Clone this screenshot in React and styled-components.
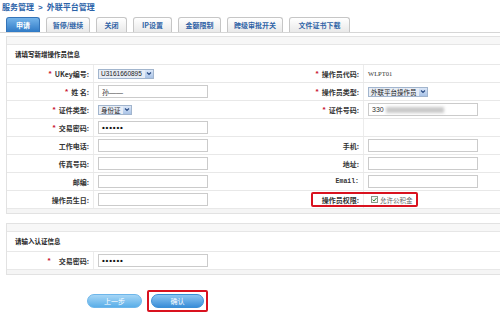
import React from 'react';
import styled, { createGlobalStyle } from 'styled-components';

const GlobalStyle = createGlobalStyle`
  html, body { margin: 0; padding: 0; background: #fff; }
  body { font-family: "Noto Sans CJK SC", "Liberation Sans", sans-serif; }
`;

const Page = styled.div`
  width: 500px;
  height: 315px;
  overflow: hidden;
`;

const Crumb = styled.div`
  height: 13px;
  line-height: 13px;
  padding-left: 2px;
  font-size: 8px;
  font-weight: 700;
  color: #2b62a8;
  span { margin: 0 4px; font-family: "Liberation Sans", sans-serif; }
`;

const TabBar = styled.div`
  display: flex;
  gap: 6px;
  margin-top: 4px;
  height: 15px;
  padding-left: 6px;
  border-bottom: 1px solid #d6d6d6;
`;

const Tab = styled.div`
  width: ${({ $w }) => $w}px;
  height: 15px;
  box-sizing: border-box;
  border: 1px solid ${({ $active }) => ($active ? '#3474b8' : '#c6c6c6')};
  border-bottom: none;
  border-radius: 3px 3px 0 0;
  background: ${({ $active }) =>
    $active ? 'linear-gradient(#74b4ea, #2f7ac6)' : 'linear-gradient(#ffffff, #e9e9e9)'};
  color: ${({ $active }) => ($active ? '#fff' : '#2f63a6')};
  font-size: 7px;
  font-weight: 700;
  display: flex;
  align-items: center;
  justify-content: center;
  white-space: nowrap;
`;

const Content = styled.div`
  padding-left: 6px;
`;

const Panel = styled.div`
  margin-top: ${({ $mt }) => $mt}px;
  width: 520px;
  border: 1px solid #e2e2e2;
  border-right: none;
`;

const HeadStrip = styled.div`
  height: 7px;
  background: #f7f7f7;
  border-bottom: 1px solid #e6e6e6;
`;

const FootStrip = styled.div`
  height: 4px;
  background: #f5f5f5;
`;

const SectionTitle = styled.div`
  height: 19px;
  line-height: 19px;
  padding-left: 8px;
  font-size: 6.5px;
  font-weight: 700;
  color: #222;
  border-bottom: 1px solid #e8e8e8;
`;

const Row = styled.div`
  position: relative;
  display: grid;
  grid-template-columns: 87px 180px 90px 1fr;
  height: 17px;
  border-bottom: 1px solid #e8e8e8;
`;

const Label = styled.div`
  display: flex;
  align-items: center;
  justify-content: flex-end;
  gap: ${({ $gap }) => $gap || 3}px;
  padding-right: 4px;
  border-right: 1px solid #ececec;
  font-size: 7px;
  font-weight: 700;
  color: #333;
  white-space: nowrap;
`;

const Mono = styled.span`
  font-family: "Liberation Mono", monospace;
  font-size: 6.5px;
`;

const Star = styled.span`
  color: #c8102e;
  font-size: 8px;
  font-family: "Liberation Sans", sans-serif;
`;

const Cell = styled.div`
  display: flex;
  align-items: center;
  padding-left: 4px;
  font-size: 7px;
  color: #333;
  white-space: nowrap;
`;

const Input = styled.div`
  width: 110px;
  height: 13px;
  box-sizing: border-box;
  border: 1px solid #cbcbcb;
  background: #fff;
  padding-left: 3px;
  display: flex;
  align-items: center;
  font-size: 7px;
  color: #333;
  font-family: "Liberation Sans", "Noto Sans CJK SC", sans-serif;
`;

const Dots = styled.span`
  font-family: "Liberation Sans", sans-serif;
  font-size: 8px;
  font-weight: 700;
  letter-spacing: 0.8px;
  color: #111;
`;

const Blur = styled.span`
  display: inline-block;
  width: 58px;
  height: 6px;
  margin-left: 2px;
  background: #c9c9c9;
  filter: blur(1.5px);
`;

const SelectBox = styled.div`
  width: ${({ $w }) => $w}px;
  height: 10px;
  box-sizing: border-box;
  border: 1px solid #a2b5cd;
  background: #e7edf6;
  display: flex;
  align-items: center;
  justify-content: space-between;
  padding-left: 2px;
  font-size: 6.5px;
  color: #222;
  white-space: nowrap;
  overflow: hidden;
  font-family: "Liberation Sans", "Noto Sans CJK SC", sans-serif;
`;

const Arrow = styled.span`
  flex-shrink: 0;
  width: 8px;
  height: 8px;
  background: linear-gradient(#dbe7f8, #a9c3e6);
  display: flex;
  align-items: center;
  justify-content: center;
`;

const Code = styled.span`
  font-family: "Liberation Serif", serif;
  font-size: 6.5px;
  color: #333;
`;

const Check = styled.span`
  display: inline-flex;
  align-items: center;
  justify-content: center;
  width: 7px;
  height: 7px;
  box-sizing: border-box;
  border: 1px solid #8a9a8a;
  background: #f4f8f4;
  margin: 0 2px 0 3px;
`;

const CheckText = styled.span`
  color: #666;
  font-size: 6.5px;
`;

const Annot = styled.div`
  position: absolute;
  left: 304px;
  top: 1px;
  width: 107px;
  height: 15px;
  box-sizing: border-box;
  border: 2px solid #d9121f;
  border-radius: 2px;
  pointer-events: none;
`;

const ButtonRow = styled.div`
  display: flex;
  align-items: center;
  gap: 5px;
  margin-top: 15px;
  padding-left: 81px;
`;

const PillButton = styled.button`
  width: ${({ $w }) => $w}px;
  height: 14px;
  padding: 0;
  border: 1px solid ${({ $primary }) => ($primary ? '#3b8fd6' : '#6db6ea')};
  border-radius: 7px;
  background: ${({ $primary }) =>
    $primary ? 'linear-gradient(#8cc6f2, #3a8ed8)' : 'linear-gradient(#a6d6f6, #5aaee8)'};
  color: #fff;
  font-size: 7px;
  font-family: "Noto Sans CJK SC", sans-serif;
`;

const Highlight = styled.span`
  display: inline-flex;
  padding: 2px;
  border: 2px solid #d9121f;
  border-radius: 2px;
`;

const Select = ({ w, children }) => (
  <SelectBox $w={w}>
    <span>{children}</span>
    <Arrow>
      <svg width="6" height="5" viewBox="0 0 6 5">
        <path d="M1 1.5 L3 3.5 L5 1.5" stroke="#2d4f86" strokeWidth="1.2" fill="none" />
      </svg>
    </Arrow>
  </SelectBox>
);

const tabs = [
  ['申请', 34],
  ['暂停/继续', 44],
  ['关闭', 31],
  ['IP设置', 39],
  ['金额限制', 43],
  ['跨级审批开关', 56],
  ['文件证书下载', 61],
];

const App = () => (
  <Page>
    <GlobalStyle />
    <Crumb>
      服务管理<span>&gt;</span>外联平台管理
    </Crumb>
    <TabBar>
      {tabs.map(([t, w], i) => (
        <Tab key={t} $w={w} $active={i === 0}>{t}</Tab>
      ))}
    </TabBar>
    <Content>
      <Panel $mt={3}>
        <HeadStrip />
        <SectionTitle>请填写新增操作员信息</SectionTitle>
        <Row>
          <Label><Star>*</Star>UKey编号:</Label>
          <Cell><Select w={56}>U3161660895</Select></Cell>
          <Label><Star>*</Star>操作员代码:</Label>
          <Cell><Code>WLPT01</Code></Cell>
        </Row>
        <Row>
          <Label><Star>*</Star>姓 名:</Label>
          <Cell><Input>孙——</Input></Cell>
          <Label><Star>*</Star>操作员类型:</Label>
          <Cell><Select w={60}>外联平台操作员</Select></Cell>
        </Row>
        <Row>
          <Label><Star>*</Star>证件类型:</Label>
          <Cell><Select w={34}>身份证</Select></Cell>
          <Label><Star>*</Star>证件号码:</Label>
          <Cell><Input>330<Blur /></Input></Cell>
        </Row>
        <Row>
          <Label><Star>*</Star>交易密码:</Label>
          <Cell><Input><Dots>••••••</Dots></Input></Cell>
          <Label />
          <Cell />
        </Row>
        <Row>
          <Label>工作电话:</Label>
          <Cell><Input /></Cell>
          <Label>手机:</Label>
          <Cell><Input /></Cell>
        </Row>
        <Row>
          <Label>传真号码:</Label>
          <Cell><Input /></Cell>
          <Label>地址:</Label>
          <Cell><Input /></Cell>
        </Row>
        <Row>
          <Label>邮编:</Label>
          <Cell><Input /></Cell>
          <Label><Mono>Email:</Mono></Label>
          <Cell><Input /></Cell>
        </Row>
        <Row>
          <Label>操作员生日:</Label>
          <Cell><Input /></Cell>
          <Label>操作员权限:</Label>
          <Cell>
            <Check>
              <svg width="5" height="5" viewBox="0 0 5 5">
                <path d="M0.6 2.6 L2 4 L4.5 1" stroke="#2e8b3a" strokeWidth="1" fill="none" />
              </svg>
            </Check>
            <CheckText>允许公积金</CheckText>
          </Cell>
          <Annot />
        </Row>
        <FootStrip />
      </Panel>

      <Panel $mt={9}>
        <HeadStrip />
        <SectionTitle>请输入认证信息</SectionTitle>
        <Row>
          <Label $gap={8}><Star>*</Star>交易密码:</Label>
          <Cell><Input><Dots>••••••</Dots></Input></Cell>
          <Cell />
          <Cell />
        </Row>
        <FootStrip />
      </Panel>

      <ButtonRow>
        <PillButton $w={55}>上一步</PillButton>
        <Highlight>
          <PillButton $w={53} $primary>确认</PillButton>
        </Highlight>
      </ButtonRow>
    </Content>
  </Page>
);

export default App;
